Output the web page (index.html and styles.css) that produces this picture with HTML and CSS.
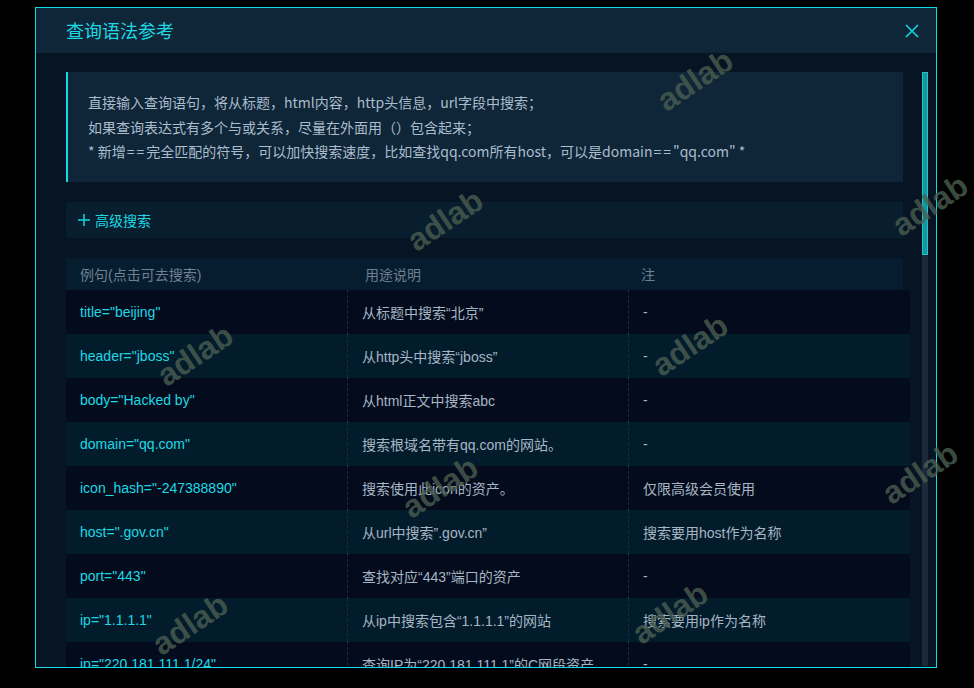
FILE: index.html
```html
<!DOCTYPE html>
<html lang="zh-CN">
<head>
<meta charset="utf-8">
<title>查询语法参考</title>
<link rel="stylesheet" href="styles.css">
</head>
<body>
<div class="dialog">
  <div class="dlg-head">
    <span class="dlg-title">查询语法参考</span>
    <svg class="close" width="14" height="14" viewBox="0 0 14 14"><path d="M1 1 L13 13 M13 1 L1 13" stroke="#12d6e0" stroke-width="1.6" fill="none"/></svg>
  </div>
  <div class="dlg-body">
    <div class="content">
      <div class="info">
        <p>直接输入查询语句，将从标题，html内容，http头信息，url字段中搜索；</p>
        <p>如果查询表达式有多个与或关系，尽量在外面用（）包含起来；</p>
        <p>* 新增<span class="eq">==</span>完全匹配的符号，可以加快搜索速度，比如查找qq.com所有host，可以是domain<span class="eq">==</span>"qq.com" *</p>
      </div>
      <div class="adv">
        <svg class="plus" width="12" height="12" viewBox="0 0 12 12"><path d="M6 0 V12 M0 6 H12" stroke="#12d6e0" stroke-width="1.5" fill="none"/></svg>
        <span>高级搜索</span>
      </div>
      <div class="thead">
        <div>例句(点击可去搜索)</div>
        <div>用途说明</div>
        <div>注</div>
      </div>
      <div class="rows">
        <div class="row"><div class="c1">title="beijing"</div><div class="c2">从标题中搜索“北京”</div><div class="c3">-</div></div>
        <div class="row"><div class="c1">header="jboss"</div><div class="c2">从http头中搜索“jboss”</div><div class="c3">-</div></div>
        <div class="row"><div class="c1">body="Hacked by"</div><div class="c2">从html正文中搜索abc</div><div class="c3">-</div></div>
        <div class="row"><div class="c1">domain="qq.com"</div><div class="c2">搜索根域名带有qq.com的网站。</div><div class="c3">-</div></div>
        <div class="row"><div class="c1">icon_hash="-247388890"</div><div class="c2">搜索使用此icon的资产。</div><div class="c3">仅限高级会员使用</div></div>
        <div class="row"><div class="c1">host=".gov.cn"</div><div class="c2">从url中搜索”.gov.cn”</div><div class="c3">搜索要用host作为名称</div></div>
        <div class="row"><div class="c1">port="443"</div><div class="c2">查找对应“443”端口的资产</div><div class="c3">-</div></div>
        <div class="row"><div class="c1">ip="1.1.1.1"</div><div class="c2">从ip中搜索包含“1.1.1.1”的网站</div><div class="c3">搜索要用ip作为名称</div></div>
        <div class="row"><div class="c1">ip="220.181.111.1/24"</div><div class="c2">查询IP为“220.181.111.1”的C网段资产</div><div class="c3">-</div></div>
      </div>
    </div>
    <div class="scrollbar"><div class="thumb"></div></div>
  </div>
</div>
<div class="wm" style="left:695px;top:80px">adlab</div>
<div class="wm" style="left:445px;top:220px">adlab</div>
<div class="wm" style="left:195px;top:355px">adlab</div>
<div class="wm" style="left:930px;top:205px">adlab</div>
<div class="wm" style="left:690px;top:345px">adlab</div>
<div class="wm" style="left:440px;top:487px">adlab</div>
<div class="wm" style="left:190px;top:624px">adlab</div>
<div class="wm" style="left:920px;top:473px">adlab</div>
<div class="wm" style="left:670px;top:613px">adlab</div>
</body>
</html>
```

FILE: styles.css
```css
html, body {
  margin: 0;
  padding: 0;
  background: #000;
  height: 688px;
  overflow: hidden;
}
body {
  position: relative;
  padding: 7px 0 0 35px;
  box-sizing: border-box;
  font-family: "Liberation Sans", "Noto Sans CJK SC", sans-serif;
  font-size: 14px;
}
.dialog {
  width: 902px;
  height: 661px;
  box-sizing: border-box;
  border: 1px solid #12dbe6;
  background: #061424;
  display: flex;
  flex-direction: column;
  overflow: hidden;
}
.dlg-head {
  height: 45px;
  flex: none;
  background: #0f2538;
  display: flex;
  align-items: center;
  justify-content: space-between;
  padding: 0 17px 0 30px;
}
.dlg-title {
  color: #1ed8e4;
  font-size: 18px;
  font-family: "Noto Sans CJK SC", sans-serif;
  line-height: 1;
  margin-top: -1px;
}
.close { margin-top: 1px; }
.dlg-body {
  flex: 1;
  display: flex;
  padding: 19px 8px 0 30px;
  gap: 12px;
  min-height: 0;
}
.content {
  width: 844px;
  overflow: hidden;
}
.info {
  margin-right: 7px;
  background: #0f2538;
  border-left: 2px solid #12dbe6;
  padding: 18px 20px 18px 20px;
  color: #aabdcc;
  font-family: "Noto Sans CJK SC", sans-serif;
  font-size: 14px;
  line-height: 24.5px;
}
.info p { margin: 0; }
.eq { letter-spacing: 2px; padding-left: 1px; }
.adv {
  margin: 20px 7px 20px 0;
  height: 36px;
  background: #081e2e;
  display: flex;
  align-items: center;
  padding-left: 12px;
  gap: 5px;
  color: #1ed8e4;
  font-family: "Noto Sans CJK SC", sans-serif;
}
.thead {
  margin-right: 7px;
  height: 32px;
  background: #061d30;
  display: grid;
  grid-template-columns: 285px 276px 1fr;
  align-items: center;
  color: #6f8090;
}
.thead div { padding-left: 14px; }
.row {
  height: 44px;
  display: grid;
  grid-template-columns: 281px 281px 1fr;
  background: #040b1c;
}
.row:nth-child(even) { background: #031c2c; }
.row > div {
  display: flex;
  align-items: center;
  padding-left: 14px;
}
.c1 { color: #1ed8e4; }
.c2, .c3 {
  color: #a6b6c4;
  border-left: 1px dashed #1c2c3c;
}
.scrollbar {
  width: 6px;
  flex: none;
  height: 594px;
  background: #1b2a3a;
}
.thumb {
  height: 183px;
  box-sizing: border-box;
  background: #1396a0;
  border: 1px solid #22c2ca;
}
.wm {
  position: absolute;
  transform: translate(-50%, -50%) rotate(-34deg);
  font-family: "Liberation Sans", sans-serif;
  font-weight: bold;
  font-size: 32px;
  color: rgba(75, 95, 80, 0.78);
  pointer-events: none;
  line-height: 1;
}
```
